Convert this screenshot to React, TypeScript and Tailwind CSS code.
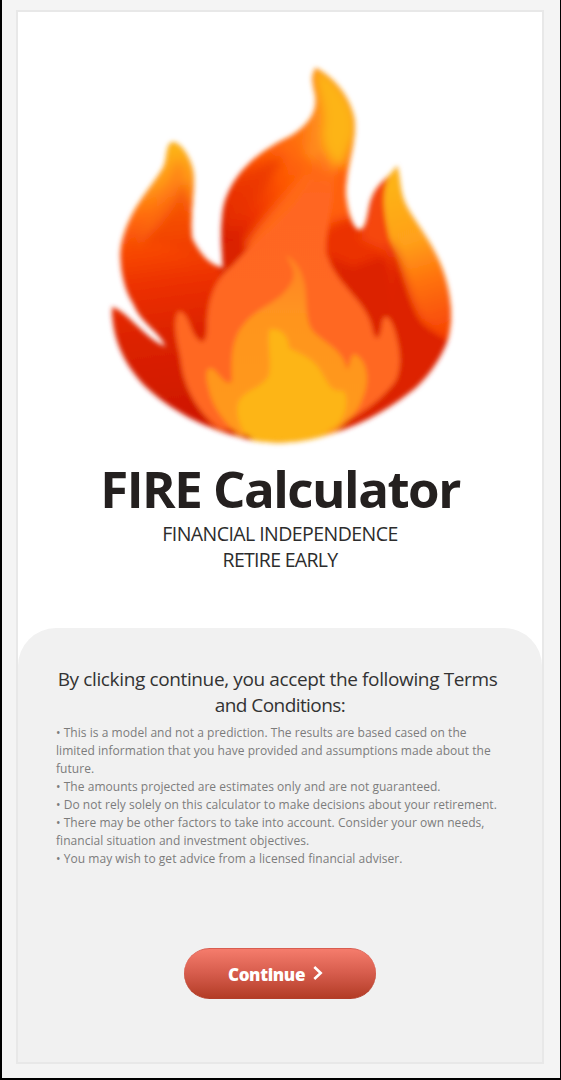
const terms = [
  '• This is a model and not a prediction. The results are based cased on the',
  'limited information that you have provided and assumptions made about the',
  'future.',
  '• The amounts projected are estimates only and are not guaranteed.',
  '• Do not rely solely on this calculator to make decisions about your retirement.',
  '• There may be other factors to take into account. Consider your own needs,',
  'financial situation and investment objectives.',
  '• You may wish to get advice from a licensed financial adviser.',
];

function Flame() {
  return (
    <svg width="360" height="400" viewBox="100 55 360 400" className="block" aria-hidden="true">
      <defs>
        <filter id="soft" x="-5%" y="-5%" width="110%" height="110%"><feGaussianBlur stdDeviation="2.6" /></filter>
        <filter id="softer" x="-20%" y="-20%" width="140%" height="140%"><feGaussianBlur stdDeviation="4" /></filter>
        <linearGradient id="left" gradientUnits="userSpaceOnUse" x1="160" y1="150" x2="195" y2="405">
          <stop offset="0" stopColor="#fdb217" />
          <stop offset=".13" stopColor="#ff9a18" />
          <stop offset=".25" stopColor="#ff6a0c" />
          <stop offset=".38" stopColor="#f84806" />
          <stop offset=".52" stopColor="#ec3000" />
          <stop offset=".72" stopColor="#dc2200" />
          <stop offset="1" stopColor="#d01800" />
        </linearGradient>
        <linearGradient id="right" gradientUnits="userSpaceOnUse" x1="385" y1="190" x2="435" y2="345">
          <stop offset="0" stopColor="#fdb217" />
          <stop offset=".35" stopColor="#ffa01a" />
          <stop offset=".6" stopColor="#ff730d" />
          <stop offset="1" stopColor="#f63f04" />
        </linearGradient>
        <linearGradient id="middle" gradientUnits="userSpaceOnUse" x1="235" y1="240" x2="330" y2="130">
          <stop offset="0" stopColor="#da2000" />
          <stop offset=".22" stopColor="#ee3400" />
          <stop offset=".5" stopColor="#fd5404" />
          <stop offset=".8" stopColor="#ff700d" />
          <stop offset="1" stopColor="#ff7a15" />
        </linearGradient>
        <linearGradient id="inner" gradientUnits="userSpaceOnUse" x1="280" y1="145" x2="280" y2="430">
          <stop offset="0" stopColor="#ff6a1b" stopOpacity="0" />
          <stop offset=".17" stopColor="#ff6620" />
          <stop offset="1" stopColor="#ff6820" />
        </linearGradient>
        <linearGradient id="gold" gradientUnits="userSpaceOnUse" x1="285" y1="255" x2="285" y2="430">
          <stop offset="0" stopColor="#ff8125" />
          <stop offset=".35" stopColor="#ff951f" />
          <stop offset="1" stopColor="#ff991d" />
        </linearGradient>
        <clipPath id="outline">
          <path d="M172 142 C181 142 190 157 193 170 C196 190 189 216 192 238 C200 255 210 265 223 268 C221 244 220 213 226 198 C237 169 260 151 289 137 C308 126 319 111 315 94 C312 82 311 74 316 68 C334 78 349 95 354 117 C358 145 344 169 346 197 C348 214 353 228 359 230 C368 230 367 209 372 197 C378 182 389 178 397 166 C401 179 399 190 406 205 C415 223 436 246 445 277 C453 304 452 326 447 342 C438 365 422 384 409 393 C384 413 354 428 320 437 C290 445 261 444 240 437 C204 428 169 409 146 387 C122 363 112 335 112 307 C128 312 144 338 166 347 C158 330 141 323 134 305 C124 290 119 266 121 247 C128 210 150 190 163 168 C168 158 165 146 172 142Z" />
        </clipPath>
      </defs>
      <g filter="url(#soft)">
        <g clipPath="url(#outline)">
          <rect x="100" y="55" width="360" height="400" fill="#dc2300" />
          <path d="M110 130H220V270L208 430H110Z" fill="url(#left)" />
          <path d="M205 260 C180 251 150 235 128 249 L184 180 L198 245Z" fill="#ec3905" opacity=".5" filter="url(#softer)" />
          <path d="M177 158 C166 193 143 212 136 248 C157 226 180 208 185 171Z" fill="#ff7612" opacity=".6" filter="url(#softer)" />
          <path d="M218 270V190L280 130L305 65H362V229L330 250Z" fill="url(#middle)" />
          <path d="M229 192 Q252 163 283 157 L265 190 L226 236Z" fill="#e63104" opacity=".65" filter="url(#softer)" />
          <path d="M245 244 C267 211 289 193 314 158 L308 205 L250 258Z" fill="#ff6915" filter="url(#softer)" />
          <path d="M304 155 C311 124 305 92 315 65 C341 77 358 105 356 133 C351 153 341 169 336 179 C326 174 315 160 304 155Z" fill="#ff881d" filter="url(#softer)" />
          <path d="M315 66 C341 81 360 108 355 135 L341 166 C329 160 321 146 322 130 C328 108 312 86 315 66Z" fill="#fdb417" filter="url(#softer)" />
          <path d="M333 170 L348 170 L350 220 L334 240Z" fill="#ff5f09" filter="url(#softer)" />
          <path d="M320 235 Q345 207 376 225 L395 260 L395 345 L320 290Z" fill="#eb3000" filter="url(#softer)" />
          <path d="M325 255 L353 267 L387 255 L399 327 L378 354Z" fill="#dc2200" filter="url(#softer)" />
          <path d="M370 185 L395 168 L404 290 L385 251 L360 240Z" fill="#f54707" filter="url(#softer)" />
          <path d="M397 163 C381 183 381 204 390 241 C401 263 403 292 417 318 C426 332 438 335 450 343 L460 250 L415 190Z" fill="url(#right)" />
          <path d="M390 241 C403 268 407 298 420 323 L447 344 L415 388 L397 400Z" fill="#dd2300" filter="url(#softer)" />
          <path d="M247 250 C278 219 308 202 315 158 C318 145 328 152 332 176 C337 205 320 244 328 258 C337 285 367 302 372 327 C374 337 379 347 382 323 C385 308 394 323 397 339 C402 358 400 373 395 382 C377 405 354 419 323 432 L220 429 C198 414 184 387 181 363 C179 346 171 327 178 312 C187 309 190 329 196 337 C204 347 207 340 207 323 C208 299 215 279 231 267Z" fill="url(#inner)" />
          <path d="M286 255 C300 262 306 280 306 299 C307 315 307 328 317 335 C329 345 344 352 347 370 C351 364 350 354 355 354 C368 361 370 382 363 397 C359 412 346 422 331 435 L239 435 C225 423 212 408 208 386 C205 376 206 365 213 369 C220 374 226 388 232 381 C231 359 231 339 244 324 C258 306 278 304 290 285 C299 271 288 263 286 255Z" fill="url(#gold)" />
          <path d="M270 329 C281 329 288 334 289 348 C300 354 315 358 323 375 C329 386 332 392 343 391 C347 394 347 403 345 411 C341 421 338 426 330 429 L314 445 L260 445 L244 432 C238 421 235 411 239 401 C246 389 263 388 269 375 C272 358 266 341 270 329Z" fill="#fdb515" />
        </g>
      </g>
    </svg>
  );
}

export default function App() {
  return (
    <div className="h-[1080px] w-[561px] overflow-hidden border-b-2 border-l-2 border-r border-black bg-[#f4f4f4] pl-[14px] pt-[10px] font-['Open_Sans','Noto_Sans',sans-serif]">
      <main className="flex h-[1054px] w-[528px] flex-col border-2 border-[#e8e8e8] bg-white">
        <header className="flex h-[616px] shrink-0 flex-col items-center pt-[43px]">
          <Flame />
          <h1 className="mt-[5px] h-[61px] whitespace-nowrap text-[51px] font-bold leading-[56px] tracking-[-1.5px] text-[#24201f]">FIRE Calculator</h1>
          <p className="flex flex-col items-center whitespace-nowrap text-[19.5px] leading-[26px] text-[#2c2c2c]">
            <span className="tracking-[-0.56px]">FINANCIAL INDEPENDENCE</span>
            <span className="tracking-[-0.7px]">RETIRE EARLY</span>
          </p>
        </header>
        <section className="flex flex-1 flex-col items-center rounded-t-[38px] bg-[#f1f1f1] pt-[38px]">
          <h2 className="flex flex-col items-center whitespace-nowrap text-[19px] leading-[26px] text-[#333]">
            <span className="pr-[5px] tracking-[-0.37px]">By clicking continue, you accept the following Terms</span>
            <span className="tracking-[-0.57px]">and Conditions:</span>
          </h2>
          <div className="mt-[6px] w-[448px] whitespace-nowrap text-[12px] leading-[18px] tracking-[0.04px] text-[#7c7c7c]">
            {terms.map((line) => (
              <p key={line}>{line}</p>
            ))}
          </div>
          <button className="mt-[80px] flex h-[51px] w-[192px] items-center justify-center gap-[8px] rounded-full border-y border-[#d85d50] border-b-[#b23e2a] bg-linear-to-b from-[#f57c6c] via-[#d65c4c] to-[#b33c25] pr-[9px] pt-[2px] text-[17px] font-extrabold tracking-[-0.35px] text-white">
            <span>Continue</span>
            <svg width="10" height="14" viewBox="0 0 10 14" fill="none" stroke="currentColor" strokeWidth="2.6" className="-mt-[3px]"><path d="M1.3 1 7.7 7 1.3 13" /></svg>
          </button>
        </section>
      </main>
    </div>
  );
}
